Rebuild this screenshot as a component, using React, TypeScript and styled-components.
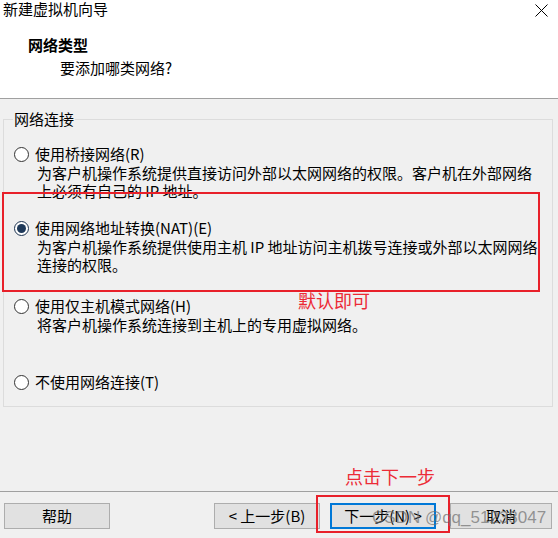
import styled, { createGlobalStyle } from 'styled-components'

const GlobalStyle = createGlobalStyle`
  html, body {
    margin: 0;
    padding: 0;
    background: #f0f0f0;
  }
  * {
    box-sizing: border-box;
  }
`

const Window = styled.div`
  position: relative;
  width: 558px;
  height: 538px;
  display: flex;
  flex-direction: column;
  background: #f0f0f0;
  font-family: "Noto Sans CJK SC", "Microsoft YaHei", sans-serif;
  font-size: 15px;
  color: #000;
  overflow: hidden;
`

const Header = styled.div`
  height: 99px;
  background: #fff;
  border-bottom: 1px solid #a0a0a0;
`

const TitleBar = styled.div`
  height: 18px;
  display: flex;
  align-items: center;
  justify-content: space-between;
  padding: 0 10px 0 3px;
  line-height: 18px;
`

const CloseIcon = styled.svg`
  display: block;
  margin-top: 2px;
`

const HeaderBody = styled.div`
  padding: 17px 0 0 28px;
`

const Heading = styled.div`
  font-weight: 700;
  line-height: 20px;
`

const Subtitle = styled.div`
  margin: 3px 0 0 32px;
  line-height: 20px;
`

const Body = styled.div`
  flex: 1;
  padding: 10px 5px 0 3px;
`

const Group = styled.fieldset`
  margin: 0;
  padding: 0 9px 14px 9px;
  border: 1px solid #dcdcdc;
  min-width: 0;
`

const Legend = styled.legend`
  padding: 0 1px;
  line-height: 20px;
`

const Options = styled.div`
  display: flex;
  flex-direction: column;
  padding-top: 15px;
`

const Option = styled.div<{ $space?: number }>`
  margin-top: ${(p) => p.$space ?? 0}px;
`

const OptionLabel = styled.label`
  display: flex;
  align-items: center;
  gap: 6px;
  line-height: 20px;
  white-space: nowrap;
`

const Radio = styled.span<{ $checked?: boolean }>`
  position: relative;
  width: 15px;
  height: 15px;
  margin-left: 1px;
  border-radius: 50%;
  border: 1px solid ${(p) => (p.$checked ? '#1c3350' : '#333')};
  background: #fff;
  flex: none;

  &::after {
    content: '';
    display: ${(p) => (p.$checked ? 'block' : 'none')};
    position: absolute;
    left: 2px;
    top: 2px;
    width: 9px;
    height: 9px;
    border-radius: 50%;
    background: #1f3a5a;
  }
`

const Desc = styled.div`
  padding-left: 24px;
  line-height: 18px;
  white-space: nowrap;
`

const Footer = styled.div`
  height: 47px;
  border-top: 1px solid #a0a0a0;
  display: flex;
  justify-content: space-between;
  padding: 11px 6px 0 4px;
`

const ButtonRow = styled.div`
  display: flex;
  gap: 10px;
`

const Button = styled.button<{ $focused?: boolean; $width?: number }>`
  width: ${(p) => p.$width ?? 106}px;
  height: 26px;
  padding: 0;
  background: #e1e1e1;
  border: ${(p) => (p.$focused ? '2px solid #0078d7' : '1px solid #adadad')};
  font-family: inherit;
  font-size: 15px;
  line-height: 20px;
  color: #000;
  text-align: center;
`

const CancelButton = styled(Button)`
  margin-left: 4px;
`

const RedBox = styled.div<{ $x: number; $y: number; $w: number; $h: number }>`
  position: absolute;
  left: ${(p) => p.$x}px;
  top: ${(p) => p.$y}px;
  width: ${(p) => p.$w}px;
  height: ${(p) => p.$h}px;
  border: 2px solid #e8202a;
  pointer-events: none;
`

const Note = styled.div<{ $x: number; $y: number }>`
  position: absolute;
  left: ${(p) => p.$x}px;
  top: ${(p) => p.$y}px;
  font-size: 18px;
  line-height: 22px;
  color: #ec2b36;
  white-space: nowrap;
`

const Watermark = styled.div`
  position: absolute;
  left: 372px;
  top: 507px;
  font-family: "Liberation Sans", Arial, sans-serif;
  font-size: 17px;
  line-height: 22px;
  color: rgba(110, 110, 110, 0.7);
  white-space: nowrap;
  pointer-events: none;
`

export default function App() {
  return (
    <>
      <GlobalStyle />
      <Window>
        <Header>
          <TitleBar>
            <span>新建虚拟机向导</span>
            <CloseIcon width="13" height="13" viewBox="0 0 13 13">
              <path d="M0.5 0.5 L12.5 12.5 M12.5 0.5 L0.5 12.5" stroke="#000" strokeWidth="1" />
            </CloseIcon>
          </TitleBar>
          <HeaderBody>
            <Heading>网络类型</Heading>
            <Subtitle>要添加哪类网络?</Subtitle>
          </HeaderBody>
        </Header>

        <Body>
          <Group>
            <Legend>网络连接</Legend>
            <Options>
              <Option>
                <OptionLabel>
                  <Radio />
                  使用桥接网络(R)
                </OptionLabel>
                <Desc>
                  为客户机操作系统提供直接访问外部以太网网络的权限。客户机在外部网络
                  <br />
                  上必须有自己的 IP 地址。
                </Desc>
              </Option>
              <Option $space={18}>
                <OptionLabel>
                  <Radio $checked />
                  使用网络地址转换(NAT)(E)
                </OptionLabel>
                <Desc>
                  为客户机操作系统提供使用主机 IP 地址访问主机拨号连接或外部以太网网络
                  <br />
                  连接的权限。
                </Desc>
              </Option>
              <Option $space={22}>
                <OptionLabel>
                  <Radio />
                  使用仅主机模式网络(H)
                </OptionLabel>
                <Desc>将客户机操作系统连接到主机上的专用虚拟网络。</Desc>
              </Option>
              <Option $space={38}>
                <OptionLabel>
                  <Radio />
                  不使用网络连接(T)
                </OptionLabel>
              </Option>
            </Options>
          </Group>
        </Body>

        <Footer>
          <Button>帮助</Button>
          <ButtonRow>
            <Button>&lt; 上一步(B)</Button>
            <Button $focused>下一步(N) &gt;</Button>
            <CancelButton $width={102}>取消</CancelButton>
          </ButtonRow>
        </Footer>

        <RedBox $x={2} $y={192} $w={538} $h={100} />
        <Note $x={298} $y={289}>默认即可</Note>
        <Note $x={345} $y={465}>点击下一步</Note>
        <RedBox $x={316} $y={495} $w={134} $h={38} />
        <Watermark>CSDN @qq_51238047</Watermark>
      </Window>
    </>
  )
}
